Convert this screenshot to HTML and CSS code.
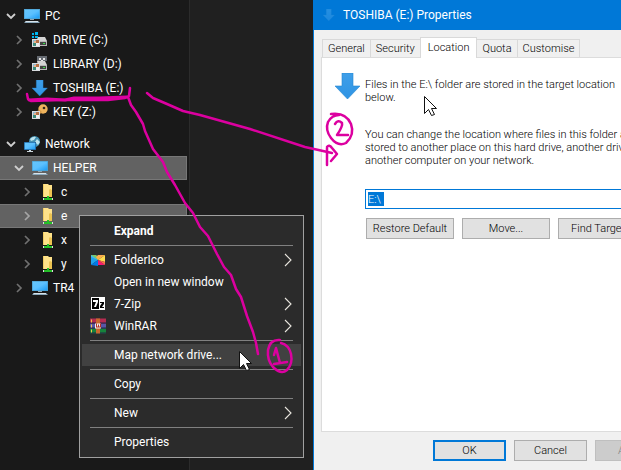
FILE: index.html
```html
<!DOCTYPE html>
<html lang="en">
<head>
<meta charset="utf-8">
<title>TOSHIBA (E:) Properties</title>
<link rel="stylesheet" href="styles.css">
</head>
<body>
<svg class="defs" aria-hidden="true">
  <defs>
    <linearGradient id="screen" x1="0" y1="0" x2="1" y2="1"><stop offset="0" stop-color="#67c5fa"/><stop offset=".5" stop-color="#5bc0ff"/><stop offset="1" stop-color="#1c9cf5"/></linearGradient>
    <linearGradient id="blue" x1="0" y1="0" x2="0" y2="1"><stop offset="0" stop-color="#3f9fe9"/><stop offset="1" stop-color="#2f94e4"/></linearGradient>
    <symbol id="open" viewBox="0 0 10 10"><path d="M1 3l4 4 4-4" fill="none" stroke="#cfcfcf" stroke-width="1.8"/></symbol>
    <symbol id="closed" viewBox="0 0 10 10"><path d="M3 1l4 4-4 4" fill="none" stroke="#707070" stroke-width="1.7"/></symbol>
    <symbol id="closed-light" viewBox="0 0 10 10"><path d="M3 1l4 4-4 4" fill="none" stroke="#a6a6a6" stroke-width="1.7"/></symbol>
    <symbol id="pc" viewBox="0 0 16 16"><path d="M0 1h16v10H0z" fill="#4c9fce"/><path d="M.7 1.7h14.6v8.6H.7z" fill="url(#screen)"/><path d="M6 11h4v1H6z" fill="#8fa5b3"/><path d="M2 13h12l2 2H0z" fill="#8daabd"/><path d="M2 13h12v1H1z" fill="#d8e3ea"/></symbol>
    <symbol id="disk" viewBox="0 0 16 16"><path d="M5 5h8l2 4v5H7z" fill="#d4d4d4"/><path d="M8 9h7v5H8z" fill="#b8b8b8"/><path d="M8 10h6v3H8z" fill="#444"/><path d="M11 11h2v1h-2z" fill="#38e044"/></symbol>
    <symbol id="share" viewBox="0 0 16 16"><path d="M0 7h8v8H0z" fill="#d9dcdf"/><path d="M1 8h6v6H1z" fill="#8fb7cd"/><path d="M4 8h3v3H4z" fill="#b56f45"/><path d="M1 11h3v3H1z" fill="#3c8a78"/><path d="M2 9h2v2H2z" fill="#e6b48e"/><path d="M4 11h3v3H4z" fill="#eee"/></symbol>
    <symbol id="drive" viewBox="0 0 16 16"><use href="#disk"/><use href="#share"/><path d="M0 1h2v2H0zM3 0h3v3H3zM0 4h2v2H0zM3 4h3v2H3z" fill="#00b7ef"/></symbol>
    <symbol id="library" viewBox="0 0 16 16"><use href="#disk"/><use href="#share"/><path d="M5 0h10v5H5z" fill="#666b72"/><path d="M7 2h2v2H7zM11 2h2v2h-2zM9 4h2v1H9z" fill="#e6e6e6"/></symbol>
    <symbol id="arrow" viewBox="0 0 26 26"><path d="M7 0h11v13h7L12.500 26 0 13h7z" fill="url(#blue)" stroke="#2686d0" stroke-width=".6"/></symbol>
    <symbol id="key" viewBox="0 0 16 16"><circle cx="11" cy="5" r="4.700" fill="#eeb35c"/><circle cx="12" cy="4" r="1.300" fill="#302820"/><path d="M5 7l3-1 2 2-3 3z" fill="#d89b49"/><use href="#share"/></symbol>
    <symbol id="network" viewBox="0 0 16 16"><circle cx="10.500" cy="5.500" r="5.500" fill="#4390b2"/><path d="M6 3q3-3 6-2l-2 3-3 1zM13 3l3 3-2 3-3-3z" fill="#bde4ee"/><path d="M0 6h12v8H0z" fill="#195f9b"/><path d="M.7 6.700h10.600v6.600H.7z" fill="url(#screen)"/><path d="M5 14h2v1h2v1H3v-1h2z" fill="#ced9df"/></symbol>
    <symbol id="folder" viewBox="0 0 16 16"><path d="M3 0h5l1 1h3v12H3z" fill="#ffe28a"/><path d="M10 5l2 1v7H9V6z" fill="#edc451"/><path d="M3 0h1v13H3z" fill="#f2cc63"/><path d="M7 12h2v2h3v2H4v-2h3z" fill="#24bf27"/><path d="M3 14h1v2H3zM12 14h1v2h-1z" fill="#ddd"/></symbol>
    <symbol id="folderico" viewBox="0 0 14 12"><path d="M0 1h5l2 5-7 1z" fill="#43b9ef"/><path d="M0 1h5l2 2v3z" fill="#7bc66b"/><path d="M5 3l2-2h7L7 6z" fill="#ffad4c"/><path d="M14 1v7L7 6z" fill="#ffdc50"/><path d="M0 3l7 3-7 5z" fill="#20a4ed"/><path d="M0 11l7-5v6z" fill="#007be6"/><path d="M7 6l7 5H7z" fill="#f51973"/><path d="M7 6l7 2v3z" fill="#ff694d"/></symbol>
    <symbol id="sevenzip" viewBox="0 0 14 14"><path d="M0 0h14v13H0z" fill="#fff"/><path d="M1 1h7v11H1z"/><path d="M2 3h5v2L5 10H3l2-5H2z" fill="#fff"/><path d="M9 5h4v2l-2 3h2v1H9V9l2-3H9z"/></symbol>
    <symbol id="winrar" viewBox="0 0 16 15"><path d="M0 0h16v5H0z" fill="#b52c50"/><path d="M0 5h16v5H0z" fill="#5956a5"/><path d="M0 10h16v5H0z" fill="#16833b"/><path d="M0 4h16v1H0zM0 9h16v1H0zM0 14h16v1H0z" fill="#252349"/><path d="M1 1h1v3H1zM1 6h1v3H1zM1 11h1v3H1z" fill="#f2c54b"/><path d="M6 0h4v15H6z" fill="#c8682e"/><path d="M5 5h6v5H5z" fill="#eee"/><path d="M6 5h1v3h1V6h1v2h1V5h1v4H6z" fill="#b72e22"/></symbol>
    <symbol id="more" viewBox="0 0 8 14"><path d="M1 1l6 6-6 6" fill="none" stroke="#e9e6df" stroke-width="1.100"/></symbol>
  </defs>
</svg>

<main class="desktop">
  <section class="explorer">
    <nav class="tree" aria-label="Folders">
      <div class="row"><svg class="chev"><use href="#open"/></svg><svg class="icon"><use href="#pc"/></svg><span>PC</span></div>
      <div class="row l1"><svg class="chev"><use href="#closed"/></svg><svg class="icon"><use href="#drive"/></svg><span>DRIVE (C:)</span></div>
      <div class="row l1"><svg class="chev"><use href="#closed"/></svg><svg class="icon"><use href="#library"/></svg><span>LIBRARY (D:)</span></div>
      <div class="row l1"><svg class="chev"><use href="#closed"/></svg><svg class="icon"><use href="#arrow"/></svg><span>TOSHIBA (E:)</span></div>
      <div class="row l1"><svg class="chev"><use href="#closed"/></svg><svg class="icon"><use href="#key"/></svg><span>KEY (Z:)</span></div>
      <div class="row group"><svg class="chev"><use href="#open"/></svg><svg class="icon"><use href="#network"/></svg><span>Network</span></div>
      <div class="row l1 selected"><svg class="chev"><use href="#open"/></svg><svg class="icon"><use href="#pc"/></svg><span>HELPER</span></div>
      <div class="row l2"><svg class="chev"><use href="#closed"/></svg><svg class="icon"><use href="#folder"/></svg><span>c</span></div>
      <div class="row l2 selected"><svg class="chev"><use href="#closed-light"/></svg><svg class="icon"><use href="#folder"/></svg><span>e</span></div>
      <div class="row l2"><svg class="chev"><use href="#closed"/></svg><svg class="icon"><use href="#folder"/></svg><span>x</span></div>
      <div class="row l2"><svg class="chev"><use href="#closed"/></svg><svg class="icon"><use href="#folder"/></svg><span>y</span></div>
      <div class="row l1"><svg class="chev"><use href="#closed"/></svg><svg class="icon"><use href="#pc"/></svg><span>TR4</span></div>
    </nav>
    <div class="menu" role="menu">
      <button class="item strong" role="menuitem"><span class="label">Expand</span></button>
      <hr>
      <button class="item" role="menuitem"><svg class="icon"><use href="#folderico" x="1" y="2" width="14" height="12"/></svg><span class="label">FolderIco</span><svg class="more"><use href="#more"/></svg></button>
      <button class="item" role="menuitem"><span class="label">Open in new window</span></button>
      <button class="item" role="menuitem"><svg class="icon"><use href="#sevenzip" x="1" y="1" width="14" height="14"/></svg><span class="label">7-Zip</span><svg class="more"><use href="#more"/></svg></button>
      <button class="item" role="menuitem"><svg class="icon"><use href="#winrar"/></svg><span class="label">WinRAR</span><svg class="more"><use href="#more"/></svg></button>
      <hr>
      <button class="item active" role="menuitem"><span class="label">Map network drive...</span></button>
      <hr>
      <button class="item" role="menuitem"><span class="label">Copy</span></button>
      <hr>
      <button class="item" role="menuitem"><span class="label">New</span><svg class="more"><use href="#more"/></svg></button>
      <hr>
      <button class="item" role="menuitem"><span class="label">Properties</span></button>
    </div>
  </section>

  <section class="dialog" role="dialog" aria-labelledby="title">
    <header class="titlebar"><svg class="titleicon"><use href="#arrow"/></svg><span id="title">TOSHIBA (E:) Properties</span></header>
    <div class="tabs" role="tablist">
      <button role="tab">General</button><button role="tab">Security</button><button role="tab" class="current" aria-selected="true">Location</button><button role="tab">Quota</button><button role="tab">Customise</button>
    </div>
    <div class="panel">
      <div class="intro"><svg class="bigicon"><use href="#arrow"/></svg><p>Files in the E:\ folder are stored in the target location<br>below.</p></div>
      <div class="details">
        <p><label for="path">You can change the location where files in this folder a<br>stored to another place on this hard drive, another drive<br>another computer on your network.</label></p>
        <div class="field"><input id="path" type="text" value="E:\"></div>
        <div class="actions"><button class="btn">Restore Default</button><button class="btn">Move...</button><button class="btn">Find Target...</button></div>
      </div>
    </div>
    <footer class="footer"><button class="btn primary">OK</button><button class="btn">Cancel</button><button class="btn" disabled>Apply</button></footer>
  </section>
</main>

<svg class="ink" viewBox="0 0 621 470" aria-hidden="true">
  <g fill="none" stroke="#dc00a0" stroke-width="2.500" stroke-linecap="round" stroke-linejoin="round">
    <path d="M27 94L28 99 31 101 61 100 108 100 125 98 129 96 130 88"/>
    <path d="M29 100L47 99 65 100 74 98 99 98 127 97" stroke-width="3"/>
    <path d="M128 97L131 105 136 112 143 124 145 131 153 149 163 162 167 172 175 185 185 203 193 213 200 227 208 236 217 254 224 267 231 275 236 289 241 297 247 316 253 332 256 343 258 354"/>
    <path d="M147 93L153 98 167 104 183 111 200 115 250 129 305 147 332 153"/>
    <path d="M280 340Q270 339 268 350Q267 360 273 367Q281 375 287 370Q293 364 291 354Q289 345 281 343"/>
    <path d="M274 355L276 348 280 363M274 364L287 362"/>
    <path d="M331 114Q346 112 351 124Q355 135 346 143Q338 147 331 138Q325 130 328 122Q332 115 339 115"/>
    <path d="M335 124Q338 119 342 123Q343 126 337 135L348 135"/>
    <path d="M327 148L327 165M327 147Q329 144 332 148L337 154 331 161"/>
  </g>
  <path class="pointer" d="M424.500 96.500v17l4-4 3 6 3-1-3-6h5z" fill="#fff" stroke="#111"/>
  <path class="pointer" d="M239.500 351.500v17l4-4 3 6 3-1-3-6h5z" fill="#fff" stroke="#111"/>
</svg>
</body>
</html>
```
FILE: styles.css
```css
* { box-sizing: border-box; }
body { margin: 0; overflow: hidden; font-family: Roboto, sans-serif; font-size: 12px; }
button { font: inherit; white-space: nowrap; }
p { margin: 0; }
.defs { position: absolute; width: 0; height: 0; }
.desktop { display: flex; height: 100vh; }

.explorer { position: relative; flex: 0 0 313px; display: flex; background: #202020; color: #fff; }
.tree { width: 190px; padding-top: 4px; background: #191919; border-right: 1px solid #2b2b2b; }
.row { display: flex; align-items: center; height: 24px; margin-right: 2px; padding-left: 6px; border: 1px solid transparent; border-left: 0; }
.row.group { margin-top: 8px; }
.row.l1 { padding-left: 14px; }
.row.l2 { padding-left: 22px; }
.row.selected { background: #626262; border-color: #777; }
.chev { width: 10px; height: 10px; margin-right: 8px; }
.icon { width: 16px; height: 16px; flex: none; }
.row .icon { margin-right: 5px; }

.menu { position: absolute; left: 79px; top: 215px; width: 225px; padding: 4px 2px; background: #2b2b2b; border: 1px solid #a0a0a0; }
.item { display: flex; align-items: center; width: 100%; height: 22px; padding: 0 9px 0 32px; border: 0; background: none; color: #fff; text-align: left; }
.item .icon { margin-left: -24px; margin-right: 8px; }
.item .label { flex: 1; }
.item.strong { font-weight: 700; }
.item.active { background: #414141; }
.more { width: 8px; height: 14px; }
.menu hr { height: 1px; margin: 3px 8px; border: 0; background: #808080; }

.dialog { flex: 1; min-width: 0; display: flex; flex-direction: column; overflow: hidden; background: #f0f0f0; border-left: 1px solid #0078d7; font-weight: 300; font-size: 11px; color: #000; white-space: nowrap; }
.titlebar { display: flex; align-items: center; gap: 8px; height: 30px; flex: none; padding-left: 9px; background: #0078d7; color: #fff; font-weight: 400; font-size: 12px; }
.titleicon { width: 12px; height: 12px; opacity: 0.6; }
.tabs { display: flex; align-items: flex-end; height: 27px; flex: none; padding-left: 8px; }
.tabs button { height: 18px; padding: 0 5px; border: 1px solid #d9d9d9; border-bottom: 0; margin-right: -1px; background: #f0f0f0; }
.tabs .current { height: 21px; margin-bottom: -1px; padding: 0 7px 2px; background: #fff; z-index: 1; }
.panel { flex: 1; margin-left: 7px; padding: 15px 0 0 13px; background: #fff; border: 1px solid #dcdcdc; border-right: 0; line-height: 13px; }
.intro { display: flex; gap: 4px; }
.intro p { padding-top: 5px; }
.bigicon { width: 26px; height: 26px; flex: none; }
.details { padding: 24px 0 0 30px; }
.field { margin-top: 22px; min-width: 280px; }
.field input { width: 100%; height: 20px; padding: 0 2px; border: 1px solid #0078d7; background: linear-gradient(#0078d7, #0078d7) 2px center / 16px 14px no-repeat #fff; color: #fff; font: inherit; }
.actions { display: flex; gap: 8px; padding: 9px 0 0 1px; }
.btn { flex: none; width: 88px; height: 21px; padding: 0; border: 1px solid #adadad; background: #e1e1e1; color: #000; }
.footer .btn { width: 73px; }
.btn.primary { border: 2px solid #0078d7; }
.btn:disabled { background: #ccc; border-color: #bfbfbf; color: #838383; }
.footer { display: flex; gap: 8px; height: 38px; flex: none; padding: 8px 0 0 119px; }

.ink { position: absolute; left: 0; top: 0; width: 621px; height: 470px; pointer-events: none; }
```
